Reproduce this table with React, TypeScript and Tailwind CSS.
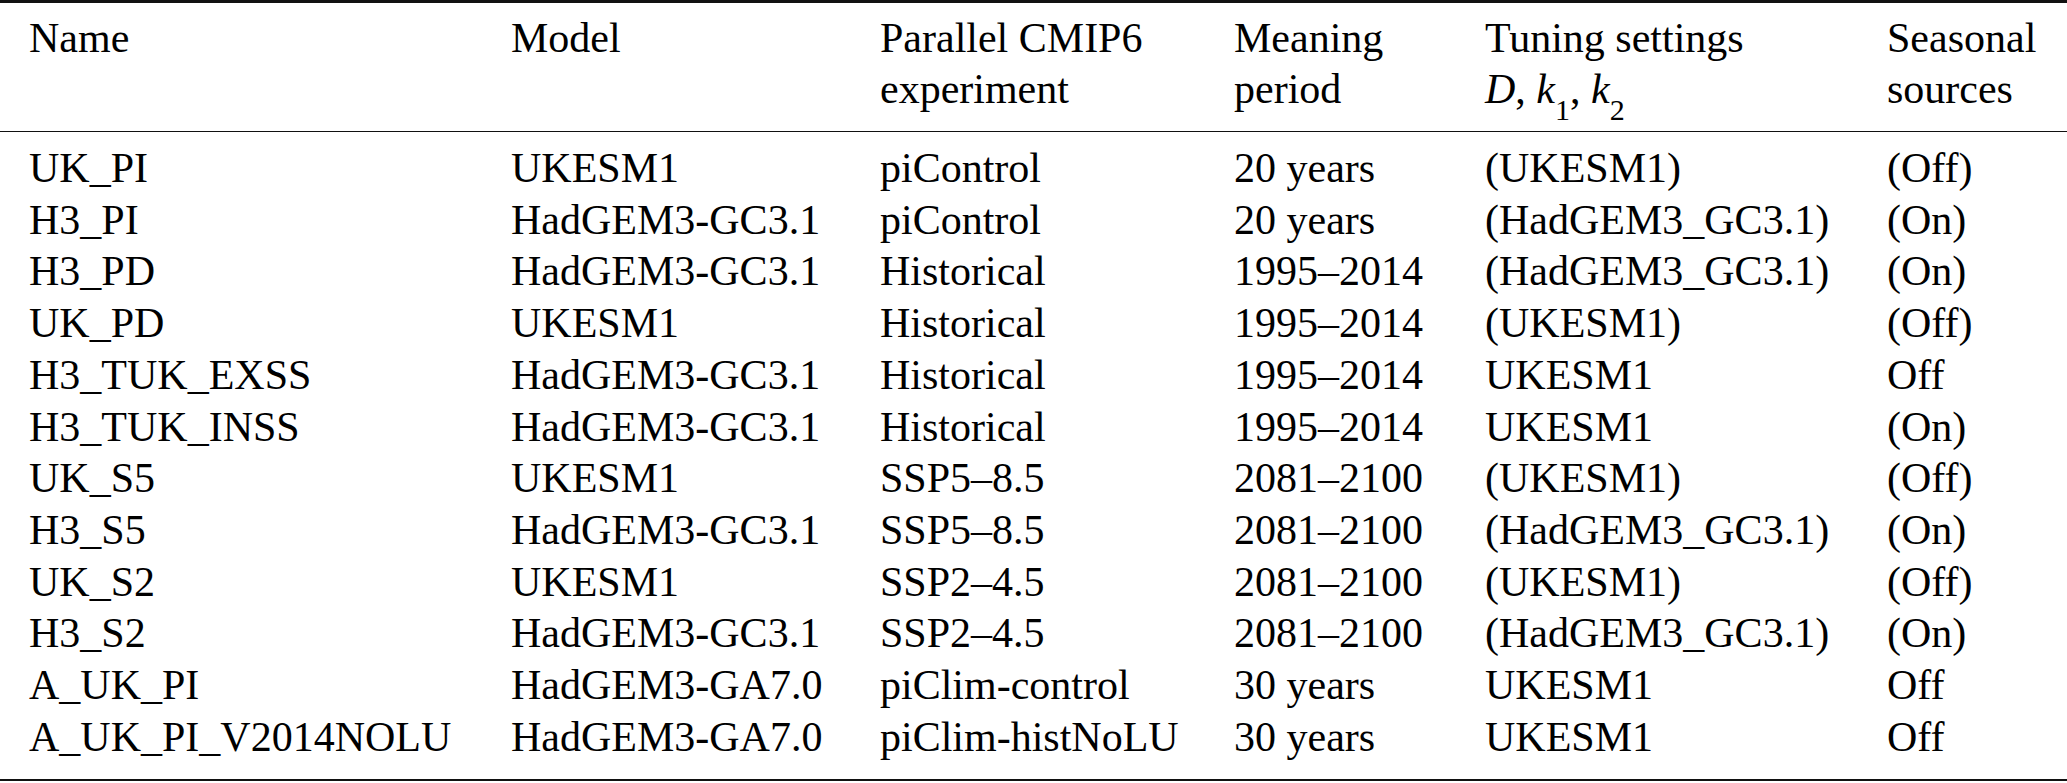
const rows: [string, string, string, string, string, string][] = [
  ["UK_PI", "UKESM1", "piControl", "20 years", "(UKESM1)", "(Off)"],
  ["H3_PI", "HadGEM3-GC3.1", "piControl", "20 years", "(HadGEM3_GC3.1)", "(On)"],
  ["H3_PD", "HadGEM3-GC3.1", "Historical", "1995–2014", "(HadGEM3_GC3.1)", "(On)"],
  ["UK_PD", "UKESM1", "Historical", "1995–2014", "(UKESM1)", "(Off)"],
  ["H3_TUK_EXSS", "HadGEM3-GC3.1", "Historical", "1995–2014", "UKESM1", "Off"],
  ["H3_TUK_INSS", "HadGEM3-GC3.1", "Historical", "1995–2014", "UKESM1", "(On)"],
  ["UK_S5", "UKESM1", "SSP5–8.5", "2081–2100", "(UKESM1)", "(Off)"],
  ["H3_S5", "HadGEM3-GC3.1", "SSP5–8.5", "2081–2100", "(HadGEM3_GC3.1)", "(On)"],
  ["UK_S2", "UKESM1", "SSP2–4.5", "2081–2100", "(UKESM1)", "(Off)"],
  ["H3_S2", "HadGEM3-GC3.1", "SSP2–4.5", "2081–2100", "(HadGEM3_GC3.1)", "(On)"],
  ["A_UK_PI", "HadGEM3-GA7.0", "piClim-control", "30 years", "UKESM1", "Off"],
  ["A_UK_PI_V2014NOLU", "HadGEM3-GA7.0", "piClim-histNoLU", "30 years", "UKESM1", "Off"],
];

const cols = "grid grid-cols-[482px_369px_354px_251px_402px_1fr] pl-[29px]";

export default function App() {
  return (
    <div className="w-[2067px] h-[783px] bg-white text-black font-['Liberation_Serif',serif] text-[42px] leading-[51.5px]">
      {/* Top rule */}
      <div className="h-[2.5px] bg-[#111]" />

      {/* Header */}
      <div className={`${cols} pt-[10px] pb-[15px]`}>
        <div>Name</div>
        <div>Model</div>
        <div>
          Parallel CMIP6
          <br />
          experiment
        </div>
        <div>
          Meaning
          <br />
          period
        </div>
        <div>
          Tuning settings
          <br />
          <i>D</i>, <i>k</i>
          <sub className="text-[30px] not-italic align-[-9px]">1</sub>, <i>k</i>
          <sub className="text-[30px] not-italic align-[-9px]">2</sub>
        </div>
        <div>
          Seasonal
          <br />
          sources
        </div>
      </div>

      {/* Mid rule */}
      <div className="h-[1.5px] bg-[#111]" />

      {/* Body */}
      <div className="pt-[11px] pb-[16px] leading-[51.7px]">
        {rows.map((r) => (
          <div key={r[0]} className={cols}>
            {r.map((c, i) => (
              <div key={i} className="whitespace-nowrap">
                {c}
              </div>
            ))}
          </div>
        ))}
      </div>

      {/* Bottom rule */}
      <div className="h-[2px] bg-[#111]" />
    </div>
  );
}
